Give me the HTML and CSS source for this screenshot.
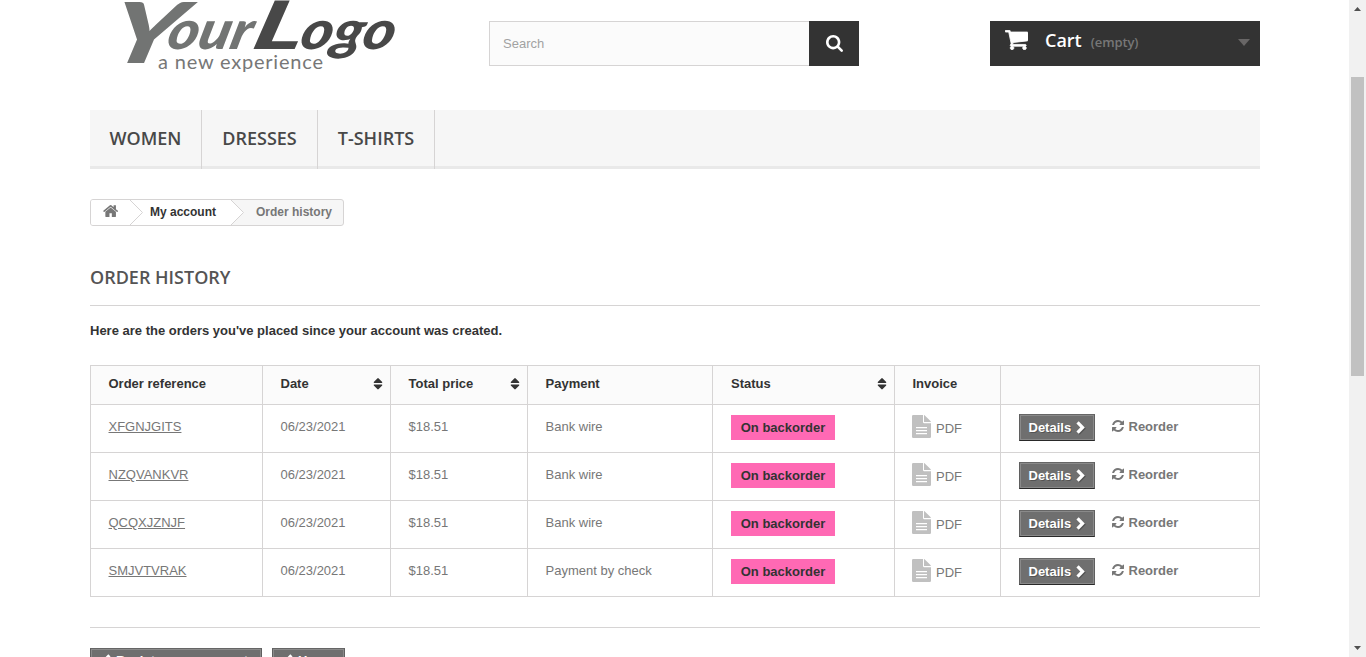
FILE: index.html
```html
<!DOCTYPE html>
<html lang="en">
<head>
<meta charset="utf-8">
<title>Order history - My Store</title>
<link rel="stylesheet" href="styles.css">
</head>
<body>
<svg class="defs" aria-hidden="true">
  <symbol id="search" viewBox="0 128 1664 1664"><path d="M1152 832q0-185-131.5-316.5t-316.5-131.5-316.5 131.5-131.5 316.5 131.5 316.5 316.5 131.5 316.5-131.5 131.5-316.5zm512 832q0 52-38 90t-90 38q-54 0-90-38l-343-342q-179 124-399 124-143 0-273.5-55.5t-225-150-150-225-55.5-273.5 55.5-273.5 150-225 225-150 273.5-55.5 273.5 55.5 225 150 150 225 55.5 273.5q0 220-124 399l343 343q37 37 37 90z"/></symbol>
  <symbol id="cart" viewBox="0 256 1664 1408"><path d="M640 1536q0 52-38 90t-90 38-90-38-38-90 38-90 90-38 90 38 38 90zm896 0q0 52-38 90t-90 38-90-38-38-90 38-90 90-38 90 38 38 90zm128-1088v512q0 24-16.5 42.500t-40.500 21.500l-1044 122q13 60 13 70 0 16-24 64h920q26 0 45 19t19 45-19 45-45 19h-1024q-26 0-45-19t-19-45q0-11 8-31.500t16-36 21.500-40 15.500-29.500l-177-823h-204q-26 0-45-19t-19-45 19-45 45-19h256q16 0 28.500 6.500t19.500 15.500 13 24.500 8 26 5.500 29.500 4.500 26h1201q26 0 45 19t19 45z"/></symbol>
  <symbol id="home" viewBox="0 253 1632 1283"><path d="M1408 992v480q0 26-19 45t-45 19h-384v-384h-256v384h-384q-26 0-45-19t-19-45v-480q0-1 .5-3t.5-3l575-474 575 474q1 2 1 6zm223-69l-62 74q-8 9-21 11h-3q-13 0-21-7l-692-577-692 577q-12 8-24 7-13-2-21-11l-62-74q-8-10-7-23.500t11-21.500l719-599q32-26 76-26t76 26l244 204v-195q0-14 9-23t23-9h192q14 0 23 9t9 23v408l219 182q10 8 11 21.500t-7 23.500z"/></symbol>
  <symbol id="refresh" viewBox="0 128 1536 1536"><path d="M1511 1056q0 5-1 7-64 268-268 434.500t-478 166.500q-146 0-282.500-55t-243.500-157l-129 129q-19 19-45 19t-45-19-19-45v-448q0-26 19-45t45-19h448q26 0 45 19t19 45-19 45l-137 137q71 66 161 102t187 36q134 0 250-65t186-179q11-17 53-117 8-23 30-23h192q13 0 22.500 9.500t9.500 22.500zm25-800v448q0 26-19 45t-45 19h-448q-26 0-45-19t-19-45 19-45l138-138q-148-137-349-137-134 0-250 65t-186 179q-11 17-53 117-8 23-30 23h-199q-13 0-22.500-9.500t-9.500-22.500v-7q65-268 270-434.500t480-166.500q146 0 284 55.500t245 156.500l130-129q19-19 45-19t45 19 19 45z"/></symbol>
  <symbol id="file" viewBox="0 0 19 23"><path fill-rule="evenodd" d="M1.200 0H11V7Q11 8.300 12.300 8.300H19V21.800Q19 23 17.800 23H1.200Q0 23 0 21.800V1.200Q0 0 1.200 0zM12 0Q12.600.2 13.100.7L18.200 5.800Q18.700 6.300 18.900 7H12zM4 12V13.300H15V12zM4 15V16.300H15V15zM4 18V19.300H15V18z"/></symbol>
  <symbol id="sort" viewBox="0 0 10 12"><path d="M5 0Q5.400 0 5.700.4L9.200 4Q9.600 5 8.700 5H1.300Q.4 5 .8 4L4.300.4Q4.600 0 5 0zM1.300 6.500H8.700Q9.600 6.500 9.200 7.500L5.700 11.100Q5 11.700 4.300 11.100L.8 7.500Q.4 6.500 1.300 6.500z"/></symbol>
  <symbol id="next" viewBox="0 0 9 13"><path d="M.4 2.500 2.700.3 8.800 6.500 2.700 12.700.4 10.500 4.300 6.500z"/></symbol>
  <symbol id="prev" viewBox="0 0 9 13"><path d="M8.600 2.500 6.300.3.200 6.500 6.300 12.700 8.600 10.500 4.700 6.500z"/></symbol>
</svg>
<div class="window">
  <div class="page">
    <header class="header">
      <a class="logo" aria-label="YourLogo a new experience">
        <svg width="310" height="80" viewBox="0 0 310 80">
          <g class="logo-name">
            <g class="logo-your">
              <text class="logo-y" transform="translate(4 63) skewX(-14)" textLength="72" lengthAdjust="spacingAndGlyphs">Y</text>
              <text transform="translate(65 49) skewX(-14)" textLength="84" lengthAdjust="spacingAndGlyphs">our</text>
            </g>
            <g class="logo-word">
              <text class="logo-l" transform="translate(150 49) skewX(-14)" textLength="50" lengthAdjust="spacingAndGlyphs">L</text>
              <text transform="translate(198 49) skewX(-14)" textLength="94" lengthAdjust="spacingAndGlyphs">ogo</text>
            </g>
          </g>
          <text class="logo-tag" x="58" y="69" textLength="165">a new experience</text>
        </svg>
      </a>
      <form class="search">
        <input class="search-input" type="text" placeholder="Search">
        <button class="search-button" type="button" aria-label="Search"><svg width="17" height="17"><use href="#search"/></svg></button>
      </form>
      <a class="cart">
        <svg class="cart-icon" width="23" height="20"><use href="#cart"/></svg>
        <b class="cart-title">Cart</b><span class="cart-empty">(empty)</span>
        <i class="cart-caret"></i>
      </a>
    </header>
    <nav class="menu"><a class="menu-women">WOMEN</a><a class="menu-dresses">DRESSES</a><a class="menu-shirts">T-SHIRTS</a></nav>
    <div class="breadcrumb">
      <a class="crumb-home"><svg width="15" height="12"><use href="#home"/></svg></a>
      <svg class="crumb-arrow" width="13" height="25" viewBox="0 0 13 25"><path class="crumb-fill" d="M0 0 12.500 12.500 0 25z"/><path class="crumb-line" d="M0 0 12.500 12.500 0 25"/></svg>
      <a class="crumb-account">My account</a>
      <svg class="crumb-arrow crumb-arrow-last" width="13" height="25" viewBox="0 0 13 25"><path class="crumb-fill" d="M0 0 12.500 12.500 0 25z"/><path class="crumb-line" d="M0 0 12.500 12.500 0 25"/></svg>
      <span class="crumb-current">Order history</span>
    </div>
    <h1 class="heading">ORDER HISTORY</h1>
    <p class="intro">Here are the orders you've placed since your account was created.</p>
    <table class="orders">
      <colgroup><col class="c-ref"><col class="c-date"><col class="c-price"><col class="c-payment"><col class="c-status"><col class="c-invoice"><col class="c-actions"></colgroup>
      <thead><tr>
        <th>Order reference</th>
        <th><div class="sortable">Date<svg width="10" height="12"><use href="#sort"/></svg></div></th>
        <th><div class="sortable">Total price<svg width="10" height="12"><use href="#sort"/></svg></div></th>
        <th>Payment</th>
        <th class="status-head"><div class="sortable">Status<svg width="10" height="12"><use href="#sort"/></svg></div></th>
        <th>Invoice</th><th></th>
      </tr></thead>
      <tbody>
        <tr><td><a class="ref">XFGNJGITS</a></td><td>06/23/2021</td><td>$18.51</td><td>Bank wire</td>
          <td class="status-cell"><span class="status">On backorder</span></td>
          <td class="invoice-cell"><a class="invoice"><svg width="19" height="23"><use href="#file"/></svg>PDF</a></td>
          <td class="action-cell"><div class="actions"><a class="button">Details<svg width="9" height="13"><use href="#next"/></svg></a><a class="reorder"><svg width="12" height="12"><use href="#refresh"/></svg>Reorder</a></div></td></tr>
        <tr><td><a class="ref">NZQVANKVR</a></td><td>06/23/2021</td><td>$18.51</td><td>Bank wire</td>
          <td class="status-cell"><span class="status">On backorder</span></td>
          <td class="invoice-cell"><a class="invoice"><svg width="19" height="23"><use href="#file"/></svg>PDF</a></td>
          <td class="action-cell"><div class="actions"><a class="button">Details<svg width="9" height="13"><use href="#next"/></svg></a><a class="reorder"><svg width="12" height="12"><use href="#refresh"/></svg>Reorder</a></div></td></tr>
        <tr><td><a class="ref">QCQXJZNJF</a></td><td>06/23/2021</td><td>$18.51</td><td>Bank wire</td>
          <td class="status-cell"><span class="status">On backorder</span></td>
          <td class="invoice-cell"><a class="invoice"><svg width="19" height="23"><use href="#file"/></svg>PDF</a></td>
          <td class="action-cell"><div class="actions"><a class="button">Details<svg width="9" height="13"><use href="#next"/></svg></a><a class="reorder"><svg width="12" height="12"><use href="#refresh"/></svg>Reorder</a></div></td></tr>
        <tr><td><a class="ref">SMJVTVRAK</a></td><td>06/23/2021</td><td>$18.51</td><td>Payment by check</td>
          <td class="status-cell"><span class="status">On backorder</span></td>
          <td class="invoice-cell"><a class="invoice"><svg width="19" height="23"><use href="#file"/></svg>PDF</a></td>
          <td class="action-cell"><div class="actions"><a class="button">Details<svg width="9" height="13"><use href="#next"/></svg></a><a class="reorder"><svg width="12" height="12"><use href="#refresh"/></svg>Reorder</a></div></td></tr>
      </tbody>
    </table>
    <footer class="footer-links">
      <a class="button back-account"><svg width="9" height="13"><use href="#prev"/></svg>Back to your account</a>
      <a class="button back-home"><svg width="9" height="13"><use href="#prev"/></svg>Home</a>
    </footer>
  </div>
  <div class="scrollbar">
    <svg width="7" height="4" viewBox="0 0 7 4"><path d="M0 4 3.500 0 7 4z"/></svg>
    <div class="thumb"></div>
    <svg class="down" width="7" height="4" viewBox="0 0 7 4"><path d="M0 0 3.500 4 7 0z"/></svg>
  </div>
</div>
</body>
</html>
```
FILE: styles.css
```css
* { box-sizing: border-box; }
body { margin: 0; height: 657px; overflow: hidden; background: #fff; color: #777; font: 13px/18px "Liberation Sans", Arial, sans-serif; }
svg { display: block; flex: none; fill: currentColor; }
.defs { display: none; }
.window { display: flex; justify-content: space-between; height: 657px; overflow: hidden; }
.page { width: 1170px; margin-left: 90px; }

.header { display: flex; height: 110px; }
.logo { width: 399px; padding-left: 10px; }
.logo svg { overflow: visible; }
.logo-name { font: italic 900 54px Lato, sans-serif; }
.logo-your { fill: #727473; }
.logo-word { fill: #484848; }
.logo-y { font-size: 84px; }
.logo-l { font-size: 67px; }
.logo-tag { font: 20px Lato, sans-serif; fill: #777; }
.search { display: flex; width: 370px; height: 45px; margin-top: 21px; }
.search-input { width: 320px; height: 45px; padding: 0 13px; border: 1px solid #d6d4d4; border-right: 0; border-radius: 0; background: #fbfbfb; font: 13px "Liberation Sans", Arial, sans-serif; }
.search-input::placeholder { color: #a2a2a2; }
.search-button { display: flex; align-items: center; justify-content: center; width: 50px; padding: 0 0 1px; border: 0; background: #333; color: #fff; }
.cart { display: flex; width: 270px; height: 45px; margin: 21px 0 0 131px; padding: 0 10px 0 15px; background: #333; }
.cart-icon { margin-top: 9px; color: #fff; stroke: #fff; stroke-width: 60; }
.cart-title { margin: 7px 0 0 17px; color: #fff; font: 600 18px/25px "Open Sans", sans-serif; text-shadow: 1px 1px rgba(0,0,0,.2); }
.cart-empty { margin: 12px 0 0 9px; font: 600 13px/19px "Open Sans", sans-serif; letter-spacing: -.1px; color: #777; }
.cart-caret { width: 12px; height: 7px; margin: 18px 0 0 auto; background: #686666; clip-path: polygon(0 0, 100% 0, 50% 100%); }

.menu { display: flex; height: 59px; border-bottom: 3px solid #e9e9e9; background: #f6f6f6; color: #484848; font: 600 18px/24px "Open Sans", sans-serif; }
.menu a { height: 59px; padding-top: 16px; border-right: 1px solid #d6d4d4; text-align: center; }
.menu-women { width: 112px; }
.menu-dresses { width: 116px; }
.menu-shirts { width: 117px; }

.breadcrumb { display: flex; width: 254px; height: 27px; margin-top: 30px; border: 1px solid #d6d4d4; border-radius: 3px; overflow: hidden; background: #f6f6f6; font-weight: bold; font-size: 12px; line-height: 24px; }
.crumb-home { width: 39px; padding: 5px 0 0 12px; background: #fff; }
.crumb-arrow { background: #fff; }
.crumb-arrow-last { background: none; }
.crumb-fill { fill: #fff; }
.crumb-line { fill: none; stroke: #d6d4d4; }
.crumb-account { width: 88px; padding-left: 7px; background: #fff; color: #333; white-space: nowrap; }
.crumb-current { padding-left: 12px; white-space: nowrap; }

.heading { height: 41px; margin: 39px 0 16px; border-bottom: 1px solid #d6d4d4; color: #555454; font: 600 18px/25px "Open Sans", sans-serif; }
.intro { margin: 0 0 26px; color: #333; font-weight: bold; line-height: 17px; }

.orders { width: 1170px; table-layout: fixed; border-collapse: separate; border-spacing: 0; border: solid #d6d4d4; border-width: 1px 0 0 1px; }
.c-ref { width: 172px; }
.c-date { width: 128px; }
.c-price { width: 137px; }
.c-payment { width: 185px; }
.c-status { width: 182px; }
.c-invoice { width: 106px; }
.c-actions { width: 259px; }
.orders th, .orders td { padding: 13px 7px 0 17.500px; border: solid #d6d4d4; border-width: 0 1px 1px 0; text-align: left; vertical-align: top; white-space: nowrap; }
.orders th { height: 39px; padding-top: 9px; background: #fbfbfb; color: #333; }
.orders .status-head { padding-left: 18px; }
.orders td { height: 48px; }
.sortable { display: flex; justify-content: space-between; }
.sortable svg { margin-top: 3px; }
.ref { text-decoration: underline; }
.orders .status-cell { padding: 10px 0 0 18px; }
.status { display: block; width: 104px; height: 25px; background: #ff69b4; color: #333; font-weight: bold; line-height: 25px; text-align: center; }
.orders .invoice-cell { padding: 10px 0 0 17px; }
.invoice { display: flex; gap: 5px; line-height: 27px; }
.invoice svg { color: #c0c0c0; }
.orders .action-cell { padding: 9px 0 0 18px; }
.actions { display: flex; gap: 17px; }
.button { display: flex; width: 76px; height: 27px; padding: 5px 0 0 8.500px; gap: 5px; border: 1px solid; border-color: #666 #5f5f5f #292929; box-shadow: inset 0 0 0 1px #8a8a8a; background: #6f6f6f; color: #fff; font-weight: bold; line-height: 16px; text-shadow: 1px 1px rgba(0,0,0,.25); }
.button svg { margin-top: .5px; filter: drop-shadow(1px 1px 0 rgba(0,0,0,.25)); }
.reorder { display: flex; gap: 4.500px; padding-top: 4px; font-weight: bold; }
.reorder svg { margin-top: 2px; }

.footer-links { display: flex; gap: 10px; margin-top: 30px; padding-top: 20px; border-top: 1px solid #d6d4d4; }
.footer-links .button { padding: 4px 0 0 11px; white-space: nowrap; }
.footer-links .button svg { margin-top: 1px; }
.footer-links .back-account { width: 172px; }
.footer-links .back-home { width: 73px; }

.scrollbar { display: flex; flex-direction: column; align-items: center; width: 17px; height: 657px; padding: 7px 0; background: #f1f1f1; color: #505050; }
.thumb { width: 13px; height: 299px; margin-top: 66px; background: #c1c1c1; }
.down { margin-top: auto; }
```
